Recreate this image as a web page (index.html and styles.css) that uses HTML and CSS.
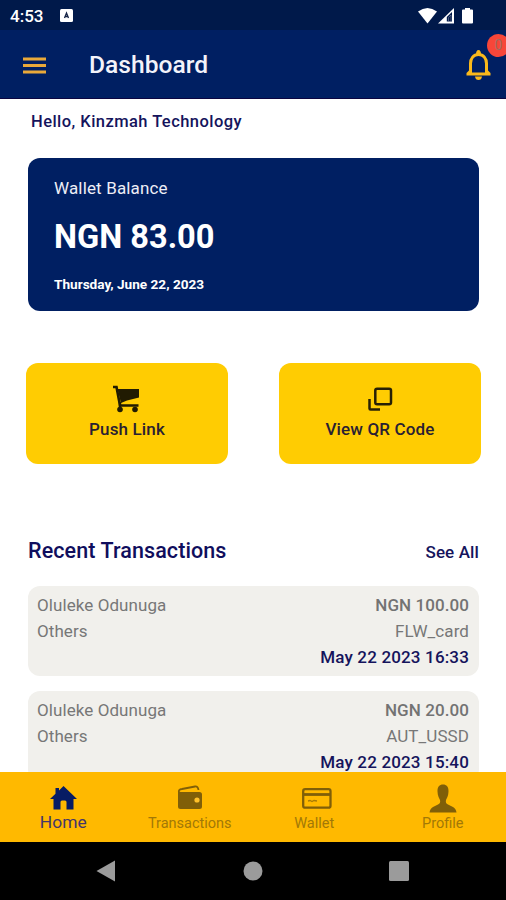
FILE: index.html
```html
<!DOCTYPE html>
<html lang="en">
<head>
<meta charset="utf-8">
<title>Dashboard</title>
<link rel="stylesheet" href="styles.css">
</head>
<body>
<div class="phone">
  <div class="status">
    <span class="clock">4:53</span>
    <svg class="app-mark" width="13" height="13" viewBox="0 0 13 13"><rect width="13" height="13" rx="1.5" fill="#fff"/><path d="M4.500 9L6.500 4L8.500 9M5 7.500H8" fill="none" stroke="#152346" stroke-width="1.300"/></svg>
    <svg class="signals" width="57" height="18" viewBox="0 0 57 18"><path d="M0 4.5Q9.500-2.500 19 4.500L9.500 16.500Z" fill="#fff"/><path d="M20 16.500L36 1V16.500Z" fill="#fff"/><path d="M28.800 14.500V10L34 5V14.500Z" fill="#00194a"/><path d="M30.500 14V10.500L33 8V14" stroke="#7d86a3" stroke-width=".6" fill="none"/><path d="M44 3.500Q44 2.500 45 2.500H47V1H52V2.500H54Q55 2.500 55 3.500V15.500Q55 16.500 54 16.500H45Q44 16.500 44 15.500Z" fill="#fff"/></svg>
  </div>
  <header class="appbar">
    <svg class="menu" width="23" height="17" viewBox="0 0 23 17"><path d="M0 2H23M0 8.500H23M0 15H23" stroke="#e9a93a" stroke-width="3"/></svg>
    <h1>Dashboard</h1>
    <div class="alerts">
      <svg width="26" height="32" viewBox="0 0 26 32"><path d="M4.500 24V14.500C4.500 9.500 7.500 5.500 12.500 5.500S20.500 9.500 20.500 14.500V24" fill="none" stroke="#fbb91b" stroke-width="3"/><path d="M10 5.500Q10 1 12.500 1T15 5.500ZM3 21.500L0.500 24V26.500H24.500V24L22 21.500V23.500H3ZM9 27.500H16Q15.500 31 12.500 31T9 27.500Z" fill="#fbb91b"/></svg>
      <span class="badge">0</span>
    </div>
  </header>
  <main>
    <p class="hello">Hello, Kinzmah Technology</p>
    <section class="balance">
      <p class="label"><span>Wallet Balance</span></p>
      <p class="amount"><span>NGN 83.00</span></p>
      <p class="date"><span>Thursday, June 22, 2023</span></p>
    </section>
    <div class="actions">
      <button class="action">
        <svg width="28" height="28" viewBox="0 0 28 28"><path d="M0 2H3.500L7 20.500H25.500" fill="none" stroke="#211b02" stroke-width="2.600"/><path d="M4.500 4H26V12.500L14 15.500L8 18Z" fill="#211b02"/><path d="M7 17V24" stroke="#211b02" stroke-width="2.400"/><circle cx="7" cy="24.500" r="2.800" fill="#211b02"/><circle cx="22" cy="24.500" r="2.800" fill="#211b02"/></svg>
        <span class="push">Push Link</span>
      </button>
      <button class="action">
        <svg width="28" height="28" viewBox="0 0 28 28"><rect x="9.300" y="3.800" width="15.700" height="15.500" rx="1.800" fill="none" stroke="#272005" stroke-width="2.500"/><path d="M3.500 14V23.500Q3.500 24.500 4.500 24.500H14" fill="none" stroke="#272005" stroke-width="2.500"/></svg>
        <span class="qr">View QR Code</span>
      </button>
    </div>
    <div class="section-head"><h2>Recent Transactions</h2><a>See All</a></div>
    <div class="list">
      <article class="tx">
        <div class="row"><span class="name">Oluleke Odunuga</span><span class="sum">NGN 100.00</span></div>
        <div class="row"><span class="kind">Others</span><span class="channel">FLW_card</span></div>
        <div class="row end"><span class="when">May 22 2023 16:33</span></div>
      </article>
      <article class="tx">
        <div class="row"><span class="name">Oluleke Odunuga</span><span class="sum">NGN 20.00</span></div>
        <div class="row"><span class="kind">Others</span><span class="channel">AUT_USSD</span></div>
        <div class="row end"><span class="when">May 22 2023 15:40</span></div>
      </article>
    </div>
  </main>
  <nav class="tabs">
    <a class="tab active"><svg width="28" height="28" viewBox="0 0 28 28"><path d="M14.500 2L28 15H24.500V25.500H17.500V18Q17.500 16.500 16 16.500H13Q11.500 16.500 11.500 18V25.500H4.500V15H1L6.500 9.700V4H10V6.500Z" fill="#071c64"/></svg><span>Home</span></a>
    <a class="tab transactions"><svg width="28" height="28" viewBox="0 0 28 28"><path d="M3 8.500Q2 5.500 6 5L19 2.500Q22 2 22.500 6" fill="none" stroke="#805f08" stroke-width="1.800"/><path d="M2 6.500Q3 8 5 8H23.500Q26 8 26 10.500V22.500Q26 25 23.500 25H4.500Q2 25 2 22.500Z" fill="#805f08"/><circle cx="21" cy="16" r="2.600" fill="#ffc12a"/></svg><span>Transactions</span></a>
    <a class="tab wallet"><svg width="32" height="28" viewBox="0 0 32 28"><rect x="3.200" y="5.200" width="27.300" height="18.500" rx="2" fill="none" stroke="#805f08" stroke-width="2.300"/><path d="M3 10.500H31" stroke="#805f08" stroke-width="2.800"/><path d="M8 17L10 16.500L12 17.500L14 16.500L17 17" fill="none" stroke="#a77b06" stroke-width="1.300"/></svg><span>Wallet</span></a>
    <a class="tab profile"><svg width="28" height="30" viewBox="0 0 28 30"><path d="M14 .5C17.500 .5 19.800 3 19.500 7.500C19.500 12 17.500 14.500 17 16C16.500 18.500 17 19.500 19 20.500L24 23Q27 24.500 27.500 28.500H.5Q1 24.500 4 23L9 20.500C11 19.500 11.500 18.500 11 16C10.500 14.500 8.500 12 8.500 7.500C8.200 3 10.500 .5 14 .5Z" fill="#805f08"/></svg><span>Profile</span></a>
  </nav>
  <div class="system">
    <svg width="20" height="22" viewBox="0 0 20 22"><path d="M.5 11L19 .5V21.500Z" fill="#9b9b9b"/></svg>
    <svg width="20" height="20" viewBox="0 0 20 20"><circle cx="10" cy="10" r="9.500" fill="#9b9b9b"/></svg>
    <svg width="20" height="20" viewBox="0 0 20 20"><rect width="20" height="20" rx="1.500" fill="#9b9b9b"/></svg>
  </div>
</div>
</body>
</html>
```
FILE: styles.css
```css
* { box-sizing: border-box; }
body, h1, h2, p { margin: 0; }
body { background: #fff; font-family: Roboto, sans-serif; color: #15145c; }
svg { display: block; flex: none; }
span, a { white-space: nowrap; }
.phone { width: 506px; height: 900px; display: flex; flex-direction: column; overflow: hidden; }
.status { height: 30px; flex: none; background: #00194a; color: #fff; display: flex; align-items: center; padding: 1px 31px 0 10px; }
.clock { font-size: 17px; font-weight: 500; width: 50px; }
.signals { margin-left: auto; }
.appbar { height: 69px; flex: none; background: #001f62; border-bottom: 1px solid #0b0540; display: flex; align-items: center; padding: 2px 14px 0 23px; }
.appbar h1 { margin-left: 43px; font-size: 24.6px; font-weight: 500; color: #f3f3fa; line-height: 30px; }
.alerts { position: relative; margin-left: auto; }
.badge { position: absolute; left: 21px; top: -15px; width: 23px; height: 23px; border-radius: 50%; background: #f74639; color: #a36b60; font-size: 14px; line-height: 23px; text-align: center; }
main { flex: 1; min-height: 0; overflow: hidden; padding: 13px 27px 0 28px; }
.hello { height: 20px; line-height: 20px; padding-left: 3px; font-size: 16.5px; font-weight: 500; letter-spacing: .45px; }
.balance { margin-top: 26px; height: 153px; border-radius: 12px; background: #001f62; color: #fff; padding: 18px 26px; }
.label { font-size: 17px; line-height: 24px; letter-spacing: .15px; color: #eeeef6; }
.amount { font-size: 32.6px; font-weight: 700; line-height: 40px; margin-top: 17px; }
.date { font-size: 13.6px; font-weight: 700; line-height: 20px; margin-top: 17px; }
.actions { display: flex; justify-content: space-between; margin: 52px -2px 0; }
.action { width: 202px; height: 101px; border: 0; border-radius: 12px; background: #ffcc02; display: flex; flex-direction: column; align-items: center; padding: 22px 0 0; font: 500 17px/22px Roboto, sans-serif; letter-spacing: .15px; color: #292033; }
.action span { margin-top: 5px; }
.section-head { display: flex; justify-content: space-between; align-items: center; height: 30px; margin-top: 73px; }
.section-head h2 { font-size: 21.5px; line-height: 26px; margin-bottom: 2px; font-weight: 500; letter-spacing: .1px; color: #100e5d; }
.section-head a { font-size: 17px; font-weight: 500; letter-spacing: .12px; }
.list { margin-top: 19px; display: grid; gap: 14.5px; }
.tx { height: 90px; background: #f1f0ec; border-radius: 12px; padding: 6px 10px 0 9px; color: #777; font-size: 17px; letter-spacing: .08px; }
.row { display: flex; justify-content: space-between; height: 26px; line-height: 26px; }
.end { justify-content: flex-end; }
.sum { font-weight: 500; color: #737373; }
.when { font-weight: 500; color: #15145c; letter-spacing: .16px; }
.tabs { height: 70px; flex: none; background: #ffb900; display: grid; grid-template-columns: repeat(4, 1fr); color: #a27807; font-size: 14.5px; }
.tab { display: flex; flex-direction: column; align-items: center; padding-top: 12px; }
.tab span { line-height: 18px; margin-top: 3px; }
.active { color: #44366a; font-size: 17.4px; }
.active span { margin-top: 1px; }
.wallet span { margin-right: 4px; }
.profile span { margin-top: 1px; }
.system { height: 58px; flex: none; background: #000; display: flex; justify-content: space-between; align-items: center; padding: 0 97px 0 96px; }
```
